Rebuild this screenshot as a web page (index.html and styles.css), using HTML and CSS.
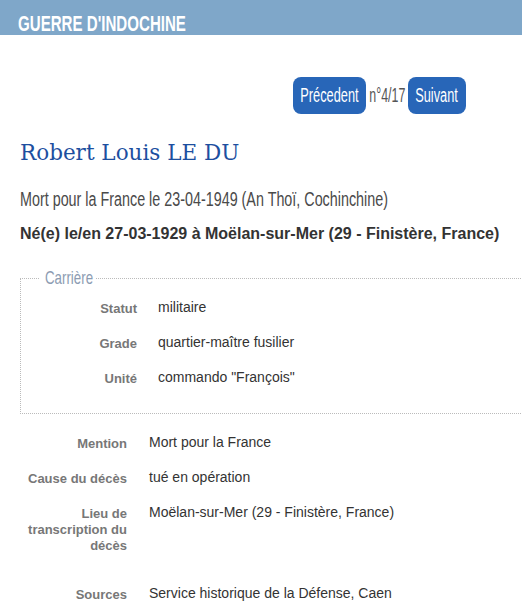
FILE: index.html
```html
<!DOCTYPE html>
<html lang="fr">
<head>
<meta charset="utf-8">
<link rel="stylesheet" href="styles.css">
</head>
<body>
<header class="topbar"><span class="cond topbar-title">GUERRE D'INDOCHINE</span></header>
<main class="page">
  <nav class="pager">
    <a class="btn btn-prev"><span class="cond cond-c">Précedent</span></a>
    <span class="count"><span class="cond cond-c">n°4/17</span></span>
    <a class="btn btn-next"><span class="cond cond-c">Suivant</span></a>
  </nav>
  <h1 class="name">Robert Louis LE DU</h1>
  <h2 class="death"><span class="cond death-text">Mort pour la France le 23-04-1949 (An Thoï, Cochinchine)</span></h2>
  <h3 class="birth">Né(e) le/en 27-03-1929 à Moëlan-sur-Mer (29 - Finistère, France)</h3>
  <fieldset class="career">
    <legend class="career-legend"><span class="cond legend-text">Carrière</span></legend>
    <dl class="fields fields-in">
      <dt>Statut</dt><dd>militaire</dd>
      <dt>Grade</dt><dd>quartier-maître fusilier</dd>
      <dt>Unité</dt><dd>commando "François"</dd>
    </dl>
  </fieldset>
  <dl class="fields fields-out">
    <dt>Mention</dt><dd>Mort pour la France</dd>
    <dt>Cause du décès</dt><dd>tué en opération</dd>
    <dt class="tall">Lieu de transcription du décès</dt><dd class="tall">Moëlan-sur-Mer (29 - Finistère, France)</dd>
    <dt>Sources</dt><dd>Service historique de la Défense, Caen</dd>
  </dl>
</main>
</body>
</html>
```
FILE: styles.css
```css
html, body { margin: 0; padding: 0; background: #fff; overflow: hidden; }
body { font-family: "Liberation Sans", Arial, sans-serif; color: #333; }

/* condensed display face (Oswald-like), emulated by horizontal scaling */
.cond {
  display: inline-block;
  white-space: nowrap;
  transform: scaleX(0.69);
  transform-origin: left center;
}
.cond-c { transform-origin: center center; }

.topbar {
  box-sizing: border-box;
  background: #7fa7c9;
  height: 35px;
  padding: 14px 0 0 18px;
  overflow: hidden;
}
.topbar-title {
  font-weight: bold;
  font-size: 22px;
  line-height: 20px;
  color: #fff;
  transform: scaleX(0.686);
}

.page { padding: 0 0 0 20px; }

.pager {
  display: flex;
  align-items: center;
  gap: 2px;
  margin: 42px 0 0 273px;
  height: 37px;
}
.btn {
  background: #2866b8;
  color: #fff;
  border-radius: 8px;
  height: 37px;
  display: flex;
  align-items: center;
  justify-content: center;
  font-size: 19.5px;
}
.btn .cond { transform: scaleX(0.655); }
.btn-prev { width: 73px; }
.btn-next { width: 58px; }
.count {
  width: 38px;
  display: flex;
  justify-content: center;
  font-size: 19.5px;
  color: #555;
}
.count .cond { transform: scaleX(0.636); }

.name {
  margin: 25px 0 0;
  font-family: "DejaVu Serif", Georgia, serif;
  font-weight: normal;
  font-size: 21.5px;
  color: #1d4f9f;
  line-height: 28px;
}
.death {
  margin: 19px 0 0;
  font-weight: normal;
  font-size: 20px;
  color: #4a4a4a;
  line-height: 26px;
}
.death-text { transform: scaleX(0.717); }
.birth {
  margin: 12px 0 0;
  font-size: 16px;
  font-weight: bold;
  color: #333;
  line-height: 20px;
}

.career {
  margin: 22px -1px 0 0;
  border: 1px dotted #bbb;
  padding: 9px 0 28px;
  min-width: 0;
}
.career-legend {
  box-sizing: border-box;
  width: 56px;
  margin-left: 19px;
  padding: 0 5px;
  font-size: 19px;
  line-height: 24px;
  color: #8c9cb2;
}
.legend-text { transform: scaleX(0.70); }

.fields {
  display: grid;
  margin: 0;
  row-gap: 19px;
  align-items: start;
}
.fields-in { grid-template-columns: 116px 1fr; column-gap: 21px; }
.fields-out { grid-template-columns: 107px 1fr; column-gap: 22px; margin-top: 20px; }
.fields dt {
  text-align: right;
  font-weight: bold;
  font-size: 13px;
  color: #777;
  line-height: 16px;
  padding-top: 2px;
  margin-bottom: -2px;
}
.fields dd {
  margin: 0;
  font-size: 14px;
  color: #333;
  line-height: 16px;
}
.fields .tall { margin-bottom: 12px; }
```
